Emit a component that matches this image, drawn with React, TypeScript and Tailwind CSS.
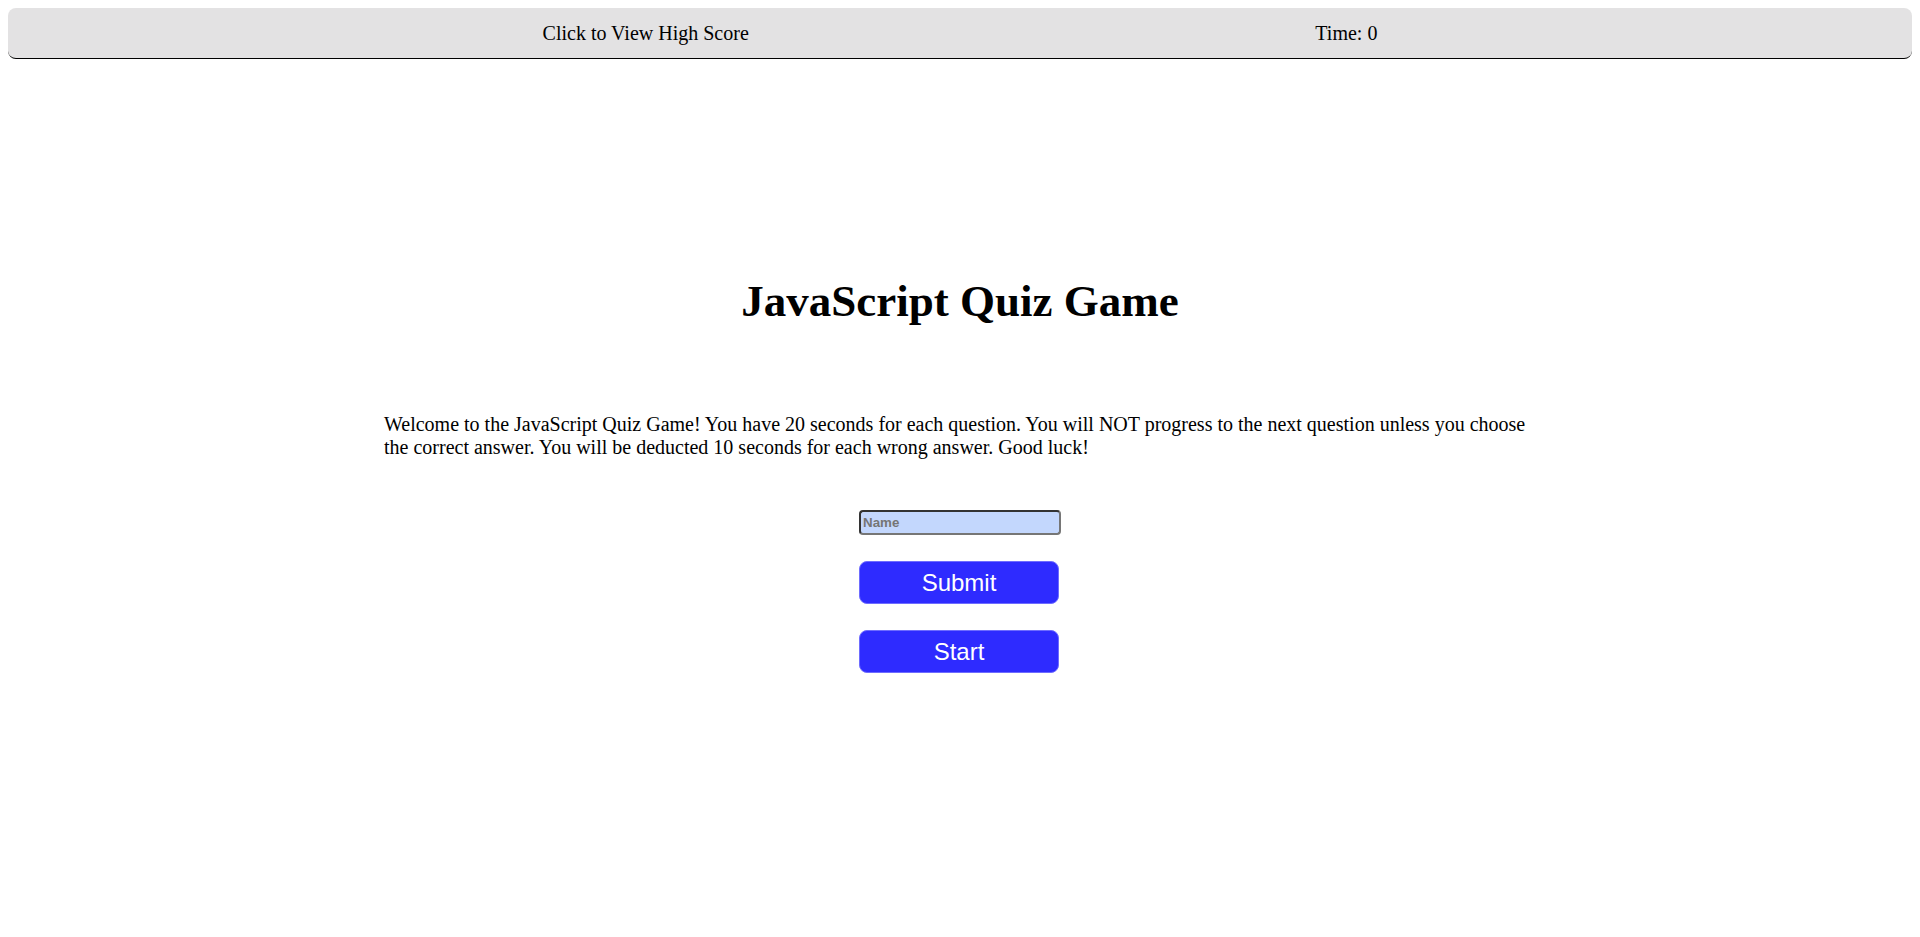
import React from "react";

export default function App() {
  return (
    <div className="min-h-[937px] bg-white font-['Liberation_Serif',serif] text-black">
      <header className="mx-2 mt-2 flex h-[51px] items-center justify-evenly rounded-lg border-b border-black bg-[#e3e2e3] text-[20px]">
        <span className="px-8">Click to View High Score</span>
        <span className="px-8">Time: 0</span>
      </header>

      <h1 className="mt-[216px] text-center text-[45px] font-bold leading-[52px]">
        JavaScript Quiz Game
      </h1>

      <p className="mx-auto mt-[86px] w-[60%] text-[20px] leading-[23px]">
        Welcome to the JavaScript Quiz Game! You have 20 seconds for each
        question. You will NOT progress to the next question unless you choose
        the correct answer. You will be deducted 10 seconds for each wrong
        answer. Good luck!
      </p>

      <div className="mx-auto mt-[51px] flex w-[202px] flex-col items-start">
        <input
          type="text"
          placeholder="Name"
          className="h-[25px] w-[202px] rounded-[4px] border-2 border-[#333] border-r-[#767676] border-b-[#767676] bg-[#c3d7fd] px-[2px] font-['Liberation_Sans',sans-serif] text-[13.33px] font-bold placeholder:text-[#757575]"
        />
        <button className="mt-[26px] h-[43px] w-[200px] rounded-lg border border-[#6e6cff] bg-[#2e2bff] font-['Liberation_Sans',sans-serif] text-[24px] text-white">
          Submit
        </button>
        <button className="mt-[26px] h-[43px] w-[200px] rounded-lg border border-[#6e6cff] bg-[#2e2bff] font-['Liberation_Sans',sans-serif] text-[24px] text-white">
          Start
        </button>
      </div>
    </div>
  );
}
